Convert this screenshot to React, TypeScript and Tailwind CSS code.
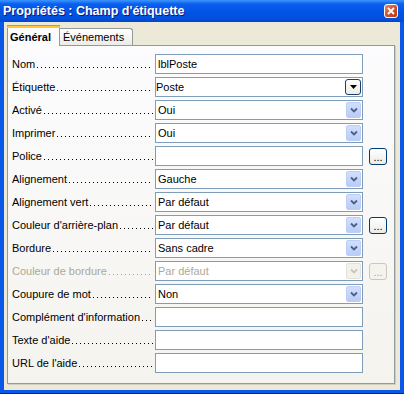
import React from 'react';

type Row = {
  label: string;
  kind: 'text' | 'combo' | 'list';
  value?: string;
  more?: boolean;
  disabled?: boolean;
};

const rows: Row[] = [
  { label: 'Nom', kind: 'text', value: 'lblPoste' },
  { label: 'Étiquette', kind: 'list', value: 'Poste' },
  { label: 'Activé', kind: 'combo', value: 'Oui' },
  { label: 'Imprimer', kind: 'combo', value: 'Oui' },
  { label: 'Police', kind: 'text', value: '', more: true },
  { label: 'Alignement', kind: 'combo', value: 'Gauche' },
  { label: 'Alignement vert', kind: 'combo', value: 'Par défaut' },
  { label: "Couleur d'arrière-plan", kind: 'combo', value: 'Par défaut', more: true },
  { label: 'Bordure', kind: 'combo', value: 'Sans cadre' },
  { label: 'Couleur de bordure', kind: 'combo', value: 'Par défaut', more: true, disabled: true },
  { label: 'Coupure de mot', kind: 'combo', value: 'Non' },
  { label: "Complément d'information", kind: 'text' },
  { label: "Texte d'aide", kind: 'text' },
  { label: "URL de l'aide", kind: 'text' },
];

const ComboButton: React.FC<{ disabled?: boolean }> = ({ disabled }) => (
  <div
    className={`w-[15px] h-[16px] mr-[1px] rounded-[2px] flex items-center justify-center border ${
      disabled
        ? 'border-[#E3E2DA] bg-[#F2F1EC]'
        : 'border-[#BCCEF7] bg-[linear-gradient(180deg,#D2DFFD_0%,#B9CCF8_100%)]'
    }`}
  >
    <svg width="8" height="6" viewBox="0 0 8 6" fill="none">
      <path
        d="M1 1.5 L4 4.5 L7 1.5"
        stroke={disabled ? '#C9C7BA' : '#4D6185'}
        strokeWidth={1.8}
      />
    </svg>
  </div>
);

const ListButton: React.FC = () => (
  <div className="w-[16px] h-[16px] mr-[1px] rounded-[3px] border border-[#1C3F6E] bg-[linear-gradient(180deg,#FFFFFF_0%,#ECEBE6_100%)] flex items-center justify-center">
    <svg width="7" height="4" viewBox="0 0 7 4">
      <path d="M0 0 H7 L3.5 4 Z" fill="#000" />
    </svg>
  </div>
);

const MoreButton: React.FC<{ disabled?: boolean }> = ({ disabled }) => (
  <div
    className={`ml-[6px] w-[18px] h-[17px] rounded-[3px] border flex items-end justify-center pb-[1px] text-[11px] leading-none ${
      disabled
        ? 'border-[#CAC8BB] bg-[#F4F3EE] text-[#ACA899]'
        : 'border-[#003C74] bg-[linear-gradient(180deg,#FFFFFF_0%,#ECEBE6_100%)] text-black'
    }`}
  >
    ...
  </div>
);

const PropRow: React.FC<{ row: Row }> = ({ row }) => (
  <div className="flex items-center h-[20px]">
    <div
      className={`w-[141px] h-[14px] flex items-end whitespace-nowrap ${
        row.disabled ? 'text-[#ACA899]' : 'text-black'
      }`}
    >
      <span className="shrink-0">{row.label}</span>
      {/* dot leader */}
      <span
        className={`flex-1 h-[1px] mb-[3px] ml-[2px] bg-repeat-x bg-[length:4px_1px] ${
          row.disabled
            ? 'bg-[linear-gradient(90deg,#ACA899_1px,transparent_1px)]'
            : 'bg-[linear-gradient(90deg,#000_1px,transparent_1px)]'
        }`}
      />
    </div>
    <div
      className={`ml-[2px] w-[208px] h-[20px] border border-[#7F9DB9] bg-white flex items-center ${
        row.kind === 'list' ? 'pl-0' : 'pl-[2px]'
      }`}
    >
      <span className={`flex-1 whitespace-nowrap ${row.disabled ? 'text-[#ACA899]' : 'text-black'}`}>
        {row.value}
      </span>
      {row.kind === 'combo' && <ComboButton disabled={row.disabled} />}
      {row.kind === 'list' && <ListButton />}
    </div>
    {row.more && <MoreButton disabled={row.disabled} />}
  </div>
);

export default function App() {
  return (
    <div
      className="w-[404px] h-[394px] flex flex-col bg-[#0A58E8] border-b border-[#001EA0] text-[11px] leading-[14px]"
      style={{ fontFamily: '"Liberation Sans", Arial, sans-serif' }}
    >
      {/* title bar */}
      <div className="h-[22px] shrink-0 flex items-center justify-between pl-[3px] pr-[6px] bg-[linear-gradient(180deg,#3D95FF_0%,#0A5FEE_18%,#0054E3_55%,#0050DC_85%,#0046D0_100%)]">
        <span className="text-white font-bold text-[12.5px] leading-[16px] [text-shadow:1px_1px_0_#0A1883]">
          Propriétés : Champ d'étiquette
        </span>
        <div className="w-[14px] h-[14px] rounded-[3px] border border-white bg-[linear-gradient(135deg,#E88A6B_0%,#D2502C_50%,#B93812_100%)] flex items-center justify-center">
          <svg width="8" height="8" viewBox="0 0 8 8">
            <path d="M1 1 L7 7 M7 1 L1 7" stroke="#fff" strokeWidth={1.8} />
          </svg>
        </div>
      </div>

      {/* body */}
      <div className="flex-1 mx-[4px] mb-[3px] bg-[#ECE9D8] pt-[2px] pl-[3px] pr-[5px] pb-[6px] flex flex-col">
        {/* tabs */}
        <div className="flex items-end h-[21px] relative z-10">
          <div className="w-[53px] h-[21px] -mb-[1px] border-x border-[#919B9C] bg-[#FCFCFE] flex flex-col">
            <div className="h-[3px] border-t border-[#E68B2C] bg-[#FFC83C] rounded-t-[2px] -mx-[1px]" />
            <div className="flex-1 pl-[2px] flex items-center font-bold text-black">Général</div>
          </div>
          <div className="w-[73px] h-[17px] border-t border-r border-[#919B9C] rounded-tr-[3px] bg-[linear-gradient(180deg,#FFFFFF_0%,#ECEBE6_100%)] flex items-center pl-[3px] text-black">
            Événements
          </div>
        </div>

        {/* panel */}
        <div className="flex-1 border border-[#919B9C] shadow-[1px_1px_0_#D0CEBF] bg-[linear-gradient(180deg,#FCFCFE_0%,#F4F3EE_100%)] pt-[8px] pl-[4px] flex flex-col gap-[3px]">
          {rows.map((row, idx) => (
            <PropRow key={idx} row={row} />
          ))}
        </div>
      </div>
    </div>
  );
}
